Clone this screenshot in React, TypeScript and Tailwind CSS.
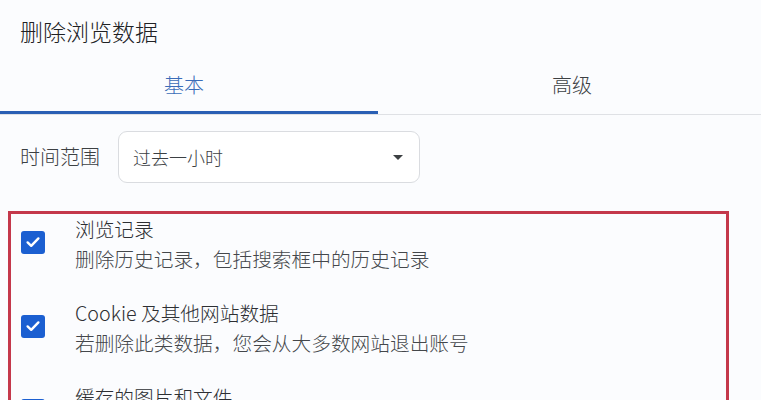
import { useState } from "react";

interface ClearItem {
  id: string;
  title: string;
  description: string;
  checked: boolean;
}

const initialItems: ClearItem[] = [
  {
    id: "history",
    title: "浏览记录",
    description: "删除历史记录，包括搜索框中的历史记录",
    checked: true,
  },
  {
    id: "cookies",
    title: "Cookie 及其他网站数据",
    description: "若删除此类数据，您会从大多数网站退出账号",
    checked: true,
  },
  {
    id: "cache",
    title: "缓存的图片和文件",
    description: "释放了不到 320 MB 的空间",
    checked: true,
  },
];

function Checkbox({ checked, onToggle }: { checked: boolean; onToggle: () => void }) {
  return (
    <button
      onClick={onToggle}
      className={
        checked
          ? "mt-[16.5px] w-6 h-[23px] shrink-0 rounded-[3px] bg-[#1b5fd1] flex items-center justify-center"
          : "mt-[16.5px] w-6 h-[23px] shrink-0 rounded-[3px] border-2 border-[#5f6368] bg-white"
      }
    >
      {checked && (
        <svg width="18" height="18" viewBox="0 0 18 18" fill="none">
          <path
            d="M3.6 9.4 L7.2 12.8 L14.4 5.4"
            stroke="white"
            strokeWidth="2.4"
            strokeLinecap="round"
            strokeLinejoin="round"
          />
        </svg>
      )}
    </button>
  );
}

export default function App() {
  const [tab, setTab] = useState<"basic" | "advanced">("basic");
  const [items, setItems] = useState<ClearItem[]>(initialItems);

  const toggle = (id: string) =>
    setItems((prev) => prev.map((i) => (i.id === id ? { ...i, checked: !i.checked } : i)));

  return (
    <div
      className="w-[761px] h-[400px] overflow-hidden bg-[#fbfcfe] text-[#3c4043] font-light"
      style={{ fontFamily: '"Noto Sans CJK SC", "Noto Sans", sans-serif' }}
    >
      {/* Title */}
      <div className="pl-5 pt-[15px] h-[56px] text-[23px] leading-8 text-[#202124]">
        删除浏览数据
      </div>

      {/* Tabs */}
      <div className="-ml-[10px] w-[776px] flex border-b border-[#dfe1e5]">
        <button
          onClick={() => setTab("basic")}
          className={
            tab === "basic"
              ? "relative flex-1 h-[58px] flex items-center justify-center text-[20px] text-[#3a6cb8]"
              : "relative flex-1 h-[58px] flex items-center justify-center text-[20px] text-[#3c4043]"
          }
        >
          基本
          {tab === "basic" && (
            <span className="absolute left-0 right-0 bottom-0 h-[3px] bg-[#2a5fb4]" />
          )}
        </button>
        <button
          onClick={() => setTab("advanced")}
          className={
            tab === "advanced"
              ? "relative flex-1 h-[58px] flex items-center justify-center text-[20px] text-[#3a6cb8]"
              : "relative flex-1 h-[58px] flex items-center justify-center text-[20px] text-[#3c4043]"
          }
        >
          高级
          {tab === "advanced" && (
            <span className="absolute left-0 right-0 bottom-0 h-[3px] bg-[#2a5fb4]" />
          )}
        </button>
      </div>

      {/* Time range */}
      <div className="mt-4 pl-5 flex items-center">
        <span className="w-[98px] text-[20px] leading-8">时间范围</span>
        <div className="w-[302px] h-[52px] rounded-[9px] border border-[#dadce0] bg-white pl-[14px] pr-[16px] flex items-center justify-between">
          <span className="text-[18px]">过去一小时</span>
          <svg width="10" height="5" viewBox="0 0 10 5">
            <path d="M0 0 L10 0 L5 5 Z" fill="#3c4043" />
          </svg>
        </div>
      </div>

      {/* Highlighted options */}
      <div className="mt-[28px] ml-2 w-[721px] h-[200px] border-[3px] border-[#c4384b] pl-[10px]">
        {items.map((item) => (
          <div key={item.id} className="flex gap-[30px] pb-6">
            <Checkbox checked={item.checked} onToggle={() => toggle(item.id)} />
            <div className="text-[19.7px] leading-[30px]">
              <div className="text-[#2d2f33]">{item.title}</div>
              <div className="text-[#44474b]">{item.description}</div>
            </div>
          </div>
        ))}
      </div>
    </div>
  );
}
